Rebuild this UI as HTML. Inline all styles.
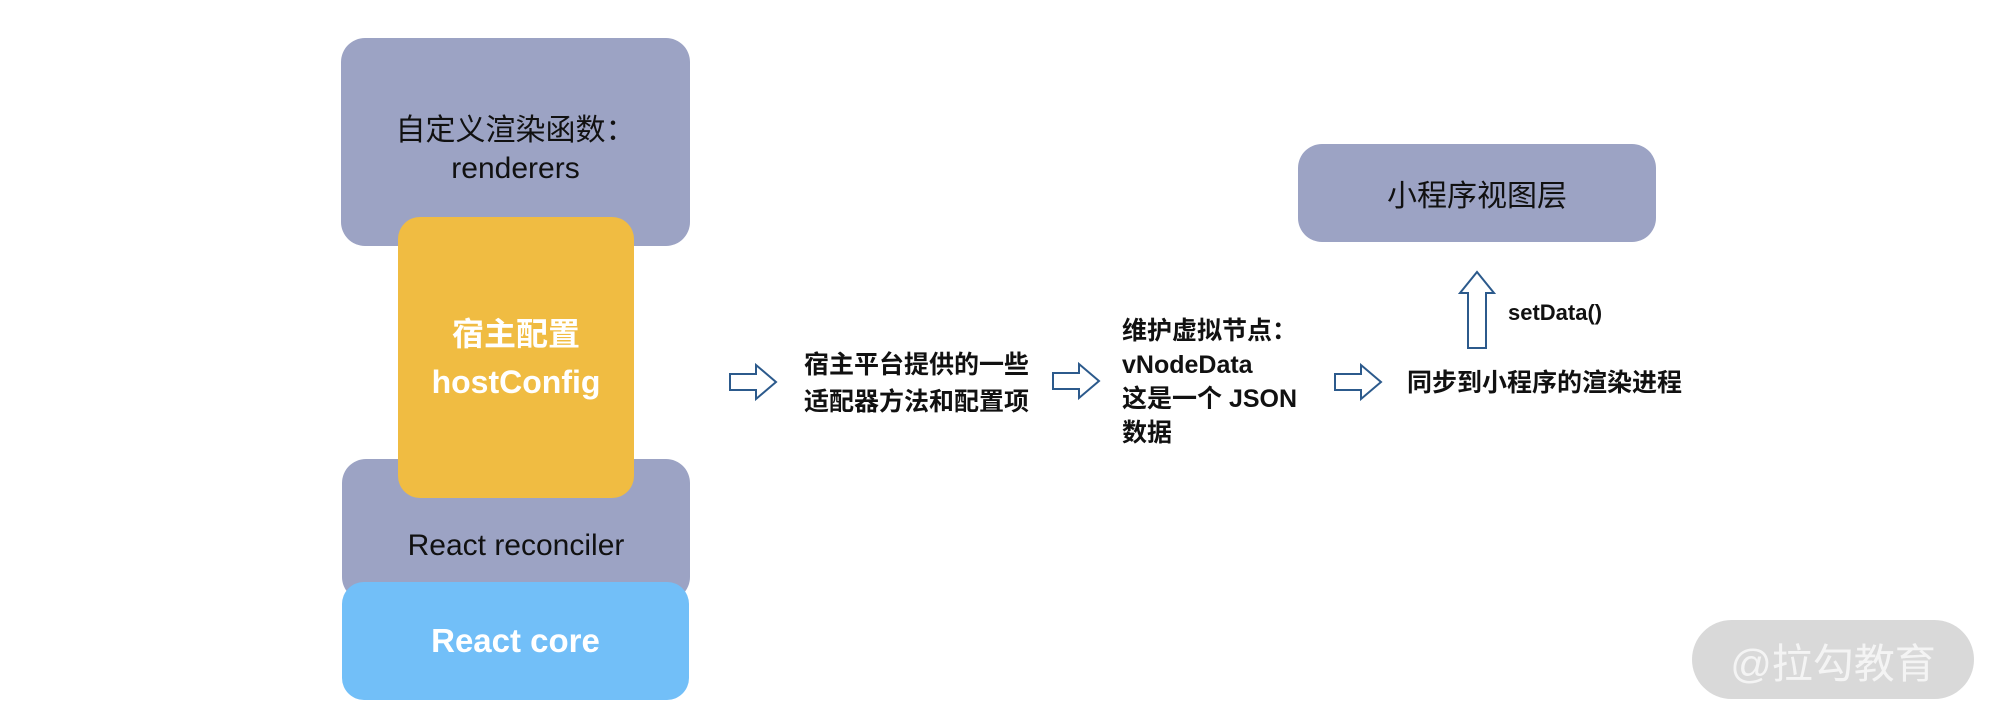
<!DOCTYPE html>
<html><head><meta charset="utf-8"><style>
body{margin:0;width:2000px;height:726px;background:#fff;position:relative;overflow:hidden;font-family:"Liberation Sans","Noto Sans CJK SC",sans-serif;}
.b{position:absolute;display:flex;flex-direction:column;align-items:center;justify-content:center;text-align:center;box-sizing:border-box}
.p{background:#9ca3c4;border-radius:24px}
.t{position:absolute;font-weight:bold;font-size:25px;color:#111;line-height:33px;white-space:nowrap}
.c{position:absolute;text-align:center;white-space:nowrap;color:#111}
svg{position:absolute}
</style></head><body>
<div class="b p" style="left:341px;top:38px;width:349px;height:208px"></div>
<div class="c" style="left:341px;width:349px;top:112px;font-size:30px;line-height:38px">自定义渲染函数：<br>renderers</div>
<div class="b p" style="left:342px;top:459px;width:348px;height:142px"></div>
<div class="c" style="left:342px;width:348px;top:527px;font-size:30px;line-height:38px">React reconciler</div>
<div class="b" style="left:342px;top:582px;width:347px;height:118px;background:#72bff8;border-radius:22px;color:#fff;font-weight:bold;font-size:33px">React core</div>
<div class="b" style="left:398px;top:217px;width:236px;height:281px;background:#f0bc42;border-radius:22px;color:#fff;font-weight:bold;font-size:32px;line-height:48px">宿主配置<br>hostConfig</div>
<div class="b p" style="left:1298px;top:144px;width:358px;height:98px;font-size:30px;color:#111">小程序视图层</div>

<svg style="left:728px;top:362px" width="52" height="40"><path d="M2 12H28V3L48 20L28 37V28H2Z" fill="#fff" stroke="#2c5a8c" stroke-width="2"/></svg>
<svg style="left:1051px;top:361px" width="52" height="40"><path d="M2 12H28V3L48 20L28 37V28H2Z" fill="#fff" stroke="#2c5a8c" stroke-width="2"/></svg>
<svg style="left:1333px;top:362px" width="52" height="40"><path d="M2 12H28V3L48 20L28 37V28H2Z" fill="#fff" stroke="#2c5a8c" stroke-width="2"/></svg>
<svg style="left:1458px;top:269px" width="40" height="84"><path d="M10 79V24H2L19 3L36 24H28V79Z" fill="#fff" stroke="#2c5a8c" stroke-width="2"/></svg>

<div class="t" style="left:804px;top:347px;line-height:37px">宿主平台提供的一些<br>适配器方法和配置项</div>
<div class="t" style="left:1122px;top:314px;font-size:25px;line-height:34px">维护虚拟节点：<br>vNodeData<br>这是一个 JSON<br>数据</div>
<div class="t" style="left:1407px;top:367px">同步到小程序的渲染进程</div>
<div class="t" style="left:1508px;top:296px;font-size:22px">setData()</div>

<div class="b" style="left:1692px;top:620px;width:282px;height:79px;background:#d9d9d9;border-radius:40px;color:#f4f4f4;font-size:41px">@拉勾教育</div>
</body></html>
